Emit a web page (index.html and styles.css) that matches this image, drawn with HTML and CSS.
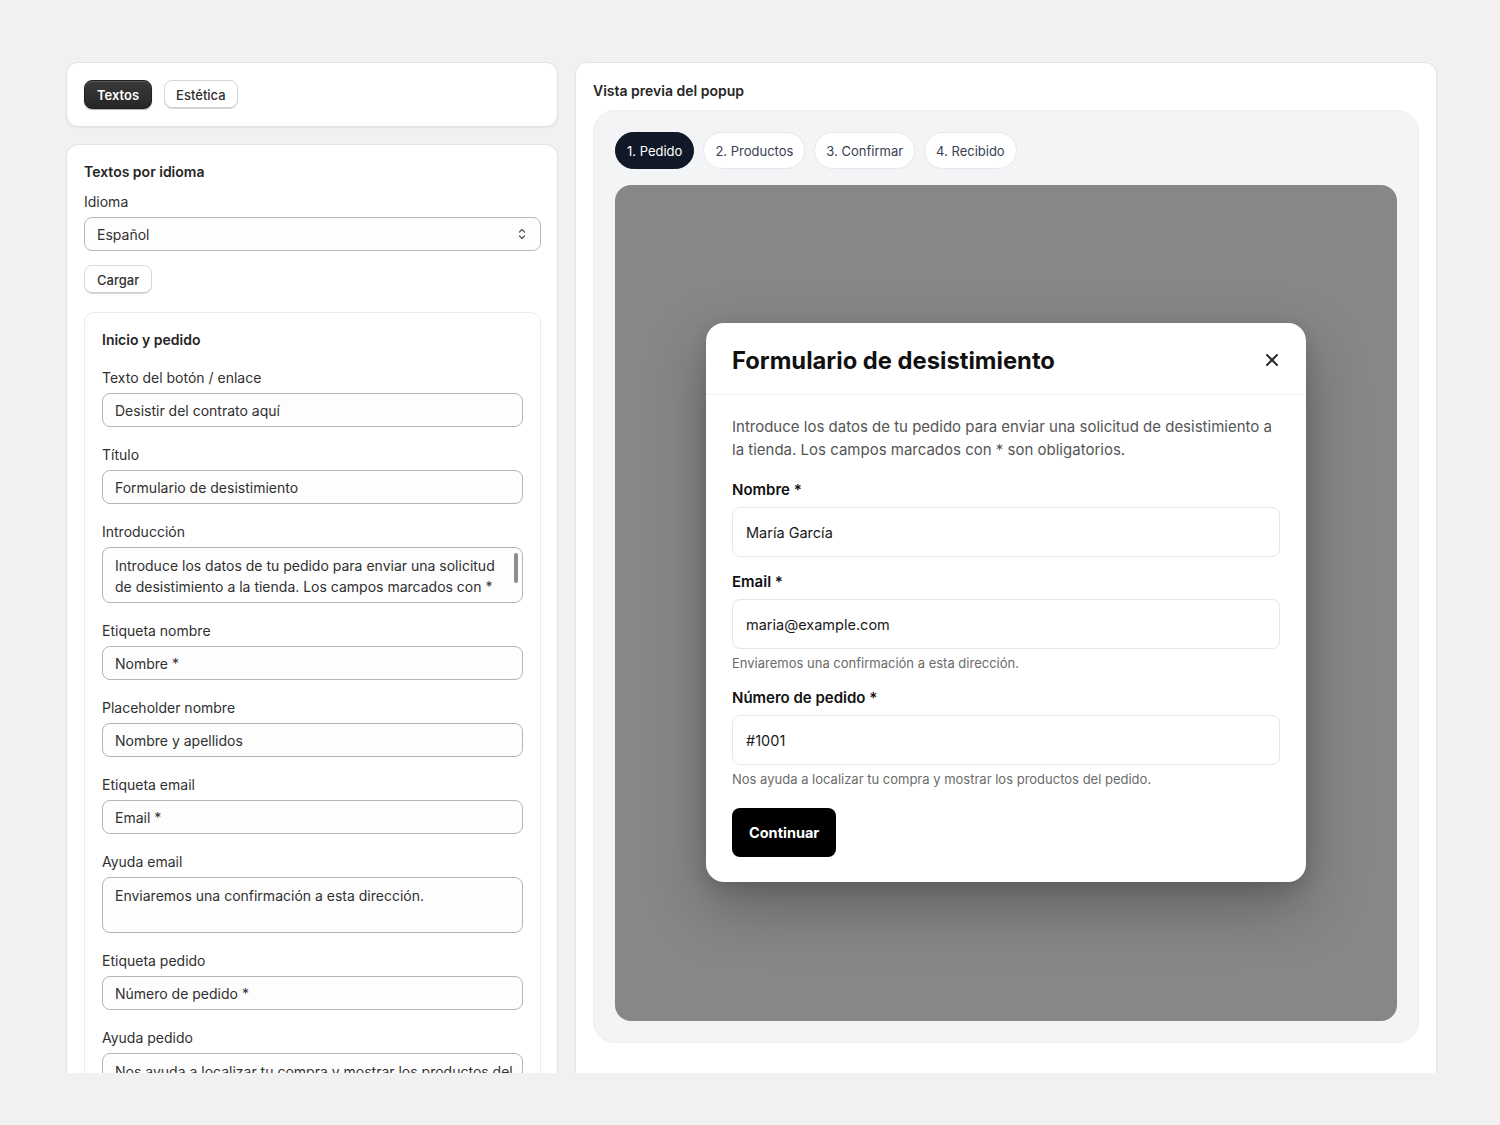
FILE: index.html
```html
<!DOCTYPE html>
<html lang="es">
<head>
<meta charset="utf-8">
<title>Editor del popup de desistimiento</title>
<link rel="stylesheet" href="styles.css">
</head>
<body>
<div class="viewport">
  <div class="layout">
    <aside class="sidebar">
      <section class="card tabs-card">
        <button class="seg seg-active" type="button">Textos</button>
        <button class="seg" type="button">Estética</button>
      </section>

      <section class="card texts-card">
        <h2 class="card-title">Textos por idioma</h2>
        <label class="label label-tight">Idioma</label>
        <div class="select">
          <span>Español</span>
          <svg class="select-icon" width="8" height="14" viewBox="0 0 8 14" fill="none" stroke="#555" stroke-width="1.2" stroke-linecap="round" stroke-linejoin="round"><path d="M1.5 5 L4 2.5 L6.5 5"/><path d="M1.5 9 L4 11.5 L6.5 9"/></svg>
        </div>
        <button class="btn-plain" type="button">Cargar</button>

        <div class="subcard">
          <h3 class="card-title">Inicio y pedido</h3>

          <div class="field">
            <label class="label">Texto del botón / enlace</label>
            <input class="input" type="text" value="Desistir del contrato aquí">
          </div>
          <div class="field">
            <label class="label">Título</label>
            <input class="input" type="text" value="Formulario de desistimiento">
          </div>
          <div class="field">
            <label class="label">Introducción</label>
            <div class="ta-wrap">
              <textarea class="textarea textarea-scroll">Introduce los datos de tu pedido para enviar una solicitud de desistimiento a la tienda. Los campos marcados con * son obligatorios.</textarea>
              <span class="ta-thumb"></span>
            </div>
          </div>
          <div class="field">
            <label class="label">Etiqueta nombre</label>
            <input class="input" type="text" value="Nombre *">
          </div>
          <div class="field">
            <label class="label">Placeholder nombre</label>
            <input class="input" type="text" value="Nombre y apellidos">
          </div>
          <div class="field">
            <label class="label">Etiqueta email</label>
            <input class="input" type="text" value="Email *">
          </div>
          <div class="field">
            <label class="label">Ayuda email</label>
            <textarea class="textarea">Enviaremos una confirmación a esta dirección.</textarea>
          </div>
          <div class="field">
            <label class="label">Etiqueta pedido</label>
            <input class="input" type="text" value="Número de pedido *">
          </div>
          <div class="field">
            <label class="label">Ayuda pedido</label>
            <textarea class="textarea">Nos ayuda a localizar tu compra y mostrar los productos del pedido.</textarea>
          </div>
        </div>
      </section>
    </aside>

    <main class="card preview-card">
      <h2 class="card-title">Vista previa del popup</h2>
      <div class="preview-panel">
        <nav class="steps">
          <span class="step step-active">1. Pedido</span>
          <span class="step">2. Productos</span>
          <span class="step">3. Confirmar</span>
          <span class="step">4. Recibido</span>
        </nav>
        <div class="stage">
          <div class="modal">
            <header class="modal-head">
              <h1 class="modal-title">Formulario de desistimiento</h1>
              <svg class="modal-close" width="14" height="14" viewBox="0 0 14 14" fill="none" stroke="#2b2b2b" stroke-width="2" stroke-linecap="round"><path d="M2 2 L12 12"/><path d="M12 2 L2 12"/></svg>
            </header>
            <div class="modal-body">
              <p class="modal-intro">Introduce los datos de tu pedido para enviar una solicitud de desistimiento a la tienda. Los campos marcados con * son obligatorios.</p>

              <div class="mfield">
                <div class="mlabel">Nombre *</div>
                <div class="minput">María García</div>
              </div>
              <div class="mfield">
                <div class="mlabel">Email *</div>
                <div class="minput">maria@example.com</div>
                <div class="mhelp">Enviaremos una confirmación a esta dirección.</div>
              </div>
              <div class="mfield">
                <div class="mlabel">Número de pedido *</div>
                <div class="minput">#1001</div>
                <div class="mhelp">Nos ayuda a localizar tu compra y mostrar los productos del pedido.</div>
              </div>

              <button class="btn-primary" type="button">Continuar</button>
            </div>
          </div>
        </div>
      </div>
    </main>
  </div>
</div>
</body>
</html>
```

FILE: styles.css
```css
* {
  box-sizing: border-box;
}

html,
body {
  margin: 0;
  padding: 0;
  background: #f1f1f1;
  font-family: Inter, "Noto Sans", "Liberation Sans", sans-serif;
  color: #303030;
}

.viewport {
  height: 1073px;
  overflow: hidden;
}

.layout {
  display: grid;
  grid-template-columns: 492px 862px;
  column-gap: 17px;
  padding: 62px 0 0 66px;
  align-items: start;
}

.sidebar {
  display: flex;
  flex-direction: column;
  gap: 17px;
}

.card {
  background: #ffffff;
  border: 1px solid #e4e4e4;
  border-radius: 12px;
  box-shadow: 0 1px 2px rgba(0, 0, 0, 0.06);
}

/* Top segmented buttons */
.tabs-card {
  display: flex;
  gap: 12px;
  padding: 17px 17px;
  height: 65px;
}

.seg {
  height: 29px;
  padding: 0 11px;
  border-radius: 8px;
  border: 1px solid #d6d6d6;
  background: #ffffff;
  font-family: inherit;
  font-size: 13px;
  font-weight: 500;
  color: #303030;
  box-shadow: inset 0 -1px 0 #cfcfcf;
}

.seg-active {
  padding: 0 12px;
  background: linear-gradient(#3a3a3a, #262626);
  border-color: #1f1f1f;
  color: #ffffff;
  font-weight: 600;
  box-shadow: inset 0 1px 0 rgba(255, 255, 255, 0.18), 0 1px 1px rgba(0, 0, 0, 0.3);
}

/* Texts card */
.texts-card {
  padding: 17px 16px 40px 17px;
  height: 1100px;
}

.card-title {
  margin: 0;
  font-size: 14px;
  line-height: 20px;
  font-weight: 600;
  color: #262626;
}

.label {
  display: block;
  font-size: 14px;
  line-height: 20px;
  color: #303030;
  margin-bottom: 5px;
}

.label-tight {
  margin-top: 10px;
}

.select {
  display: flex;
  align-items: center;
  justify-content: space-between;
  height: 34px;
  padding: 0 14px 0 12px;
  border: 1px solid #b8b8b8;
  border-radius: 8px;
  background: #fdfdfd;
  font-size: 14px;
  color: #303030;
}

.select-icon {
  display: block;
}

.btn-plain {
  display: block;
  margin-top: 14px;
  height: 29px;
  padding: 0 12px;
  border-radius: 8px;
  border: 1px solid #d9d9d9;
  background: #ffffff;
  font-family: inherit;
  font-size: 13px;
  font-weight: 500;
  color: #303030;
  box-shadow: inset 0 -1px 0 #d0d0d0;
}

.subcard {
  margin-top: 18px;
  padding: 17px 17px;
  border: 1px solid #ececec;
  border-radius: 10px;
}

.subcard .card-title {
  margin-bottom: 18px;
}

.field {
  margin-bottom: 18px;
}

.input,
.textarea {
  display: block;
  width: 100%;
  border: 1px solid #b5b5b5;
  border-radius: 8px;
  background: #fdfdfd;
  font-family: inherit;
  font-size: 14px;
  color: #303030;
  outline: none;
}

.input {
  height: 34px;
  padding: 0 12px;
}

.textarea {
  height: 56px;
  padding: 7px 6px 0 12px;
  line-height: 21px;
  resize: none;
  overflow: hidden;
}

.textarea-scroll {
  padding-right: 18px;
}

/* Scroll thumb of the introduction field */
.ta-wrap {
  position: relative;
}

.ta-thumb {
  position: absolute;
  right: 5px;
  top: 6px;
  width: 4px;
  height: 30px;
  border-radius: 2px;
  background: #8e8e8e;
}

/* Preview card */
.preview-card {
  padding: 18px 17px 30px;
  height: 1100px;
}

.preview-card > .card-title {
  line-height: 20px;
  margin-bottom: 9px;
}

.preview-panel {
  background: #f3f4f6;
  border: 1px solid #eceef1;
  border-radius: 22px;
  padding: 21px 21px 21px;
}

.steps {
  display: flex;
  gap: 9px;
  margin-bottom: 16px;
}

.step {
  display: inline-flex;
  align-items: center;
  height: 37px;
  padding: 0 11px;
  border-radius: 999px;
  background: #ffffff;
  border: 1px solid #e6e7ea;
  font-size: 13px;
  color: #374151;
}

.step-active {
  background: #111827;
  border-color: #111827;
  color: #ffffff;
}

.stage {
  height: 836px;
  background: #878787;
  border-radius: 16px;
  display: flex;
  align-items: center;
  justify-content: center;
}

.modal {
  width: 600px;
  margin-top: -1px;
  background: #ffffff;
  border-radius: 18px;
  box-shadow: 0 24px 60px rgba(0, 0, 0, 0.28), 0 6px 18px rgba(0, 0, 0, 0.12);
}

.modal-head {
  display: flex;
  align-items: center;
  justify-content: space-between;
  padding: 22px 27px 17px 26px;
  border-bottom: 1px solid #f0f0f0;
}

.modal-title {
  margin: 0;
  font-size: 23.75px;
  line-height: 32px;
  font-weight: 700;
  color: #111111;
}

.modal-close {
  display: block;
  margin-top: -3px;
}

.modal-body {
  padding: 20px 26px 25px;
}

.modal-intro {
  margin: 0;
  font-size: 15px;
  line-height: 23px;
  color: #555555;
}

.mfield {
  margin-top: 19px;
}

.mfield + .mfield {
  margin-top: 15px;
}

.mfield:last-of-type {
  margin-top: 16px;
}

.mlabel {
  font-size: 15px;
  line-height: 20px;
  font-weight: 600;
  color: #111111;
  margin-bottom: 7px;
}

.minput {
  display: flex;
  align-items: center;
  height: 50px;
  padding: 0 13px;
  border: 1px solid #e6e6e6;
  border-radius: 8px;
  font-size: 14.5px;
  color: #1a1a1a;
}

.mhelp {
  margin-top: 5px;
  font-size: 13px;
  line-height: 18px;
  color: #6b6b6b;
}

.btn-primary {
  display: block;
  margin-top: 20px;
  height: 49px;
  padding: 0 17px;
  border: none;
  border-radius: 8px;
  background: #000000;
  color: #ffffff;
  font-family: inherit;
  font-size: 14.5px;
  font-weight: 700;
}
```
